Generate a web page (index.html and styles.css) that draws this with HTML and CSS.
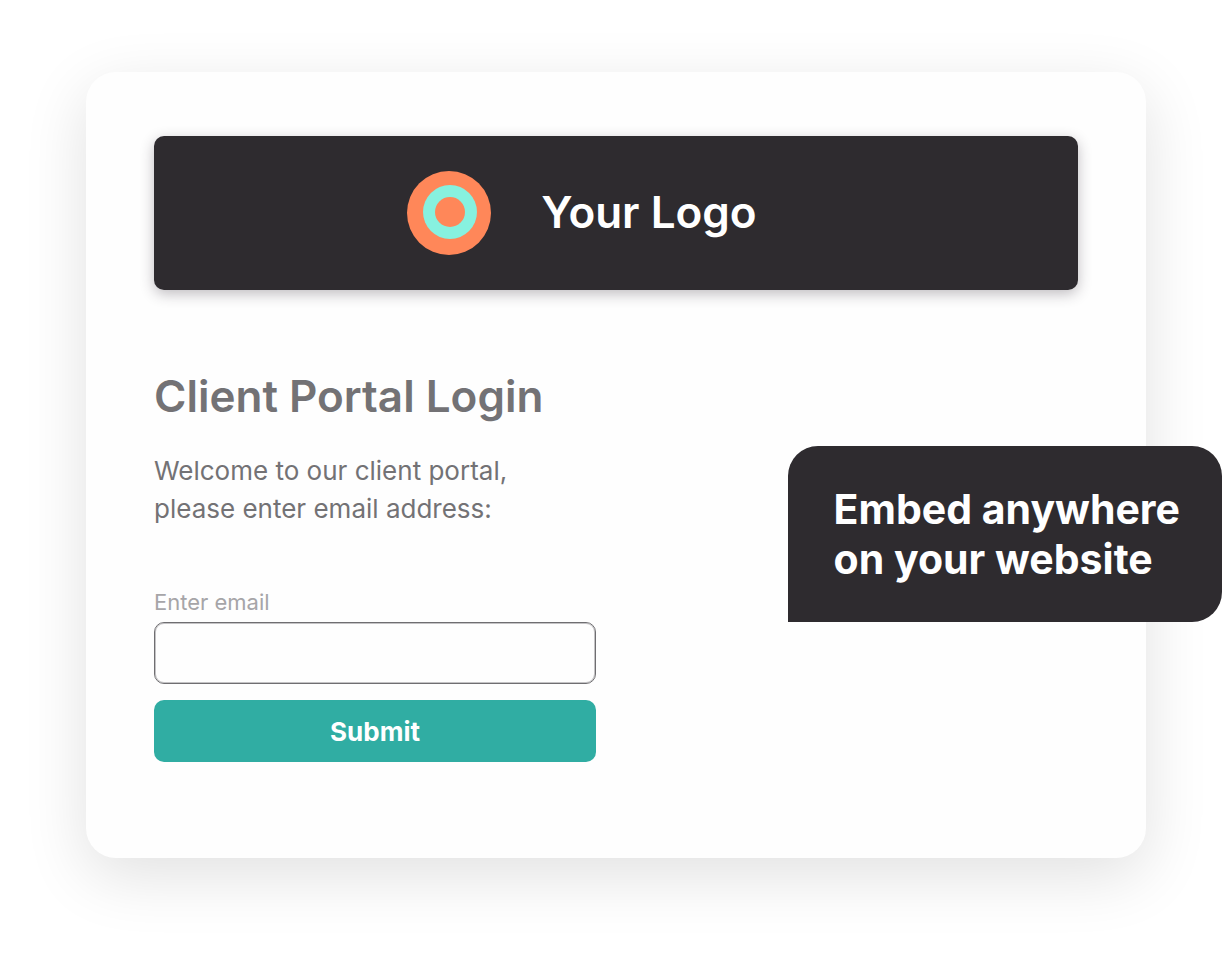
FILE: index.html
```html
<!DOCTYPE html>
<html lang="en">
<head>
  <meta charset="utf-8">
  <title>Client Portal Login</title>
  <link rel="stylesheet" href="styles.css">
</head>
<body>
  <main class="portal">
    <header class="banner">
      <svg class="logo" viewBox="0 0 84 84" aria-hidden="true">
        <circle cx="42" cy="42" r="42" fill="#ff8759"/>
        <circle cx="43" cy="41" r="27" fill="#87f1df"/>
        <circle cx="43" cy="41" r="15" fill="#ff8759"/>
      </svg>
      <span class="brand">Your Logo</span>
    </header>
    <form class="login">
      <h1>Client Portal Login</h1>
      <p class="welcome">Welcome to our client portal,<br>please enter email address:</p>
      <label for="email">Enter email</label>
      <input type="email" name="email" id="email">
      <button type="submit">Submit</button>
    </form>
    <aside class="callout">Embed anywhere<br>on your website</aside>
  </main>
</body>
</html>
```

FILE: styles.css
```css
* {
  box-sizing: border-box;
}
body {
  margin: 0;
  padding: 72px 86px 108px;
  background: #fff;
  color: #737275;
  font-family: Inter, "Liberation Sans", sans-serif;
}
.portal {
  position: relative;
  padding: 64px 68px 96px;
  border-radius: 30px;
  background: #fefefe;
  box-shadow: 0 18px 64px rgba(0, 0, 0, 0.12);
}
.banner {
  display: flex;
  align-items: center;
  justify-content: center;
  gap: 50px;
  padding: 35px 68px 35px 0;
  margin-bottom: 80px;
  border-radius: 10px;
  background: #2e2b2f;
  box-shadow: 0 4px 14px rgba(46, 36, 50, 0.3);
}
.logo {
  width: 84px;
  height: 84px;
}
.brand {
  padding-bottom: 2px;
  color: #fff;
  font-size: 44px;
  line-height: 52px;
  font-weight: 600;
}
.login {
  display: flex;
  flex-direction: column;
  max-width: 442px;
}
h1 {
  margin: 0 0 30px;
  font-size: 44px;
  line-height: 52px;
  font-weight: 600;
}
.welcome {
  margin: 0 0 60px;
  font-size: 26px;
  line-height: 38px;
}
label {
  margin-bottom: 6px;
  color: #a6a5a8;
  font-size: 22px;
  line-height: 28px;
}
input {
  height: 62px;
  padding: 0 16px;
  margin-bottom: 16px;
  border: 1px solid #6f6e71;
  border-radius: 10px;
  background: #fefefe;
  box-shadow: inset 0 0 0 1px #c4c3c5;
  font: inherit;
  font-size: 26px;
}
button {
  height: 62px;
  border: 0;
  border-radius: 10px;
  background: #30ada3;
  color: #fff;
  font: inherit;
  font-size: 26px;
  font-weight: 700;
  cursor: pointer;
}
/* speech bubble hanging over the right edge of the card */
.callout {
  position: absolute;
  top: 374px;
  right: -76px;
  padding: 38px 42px 38px 46px;
  border-radius: 30px 30px 30px 0;
  background: #2e2b2f;
  color: #fff;
  font-size: 41px;
  line-height: 50px;
  font-weight: 700;
  white-space: nowrap;
}
```
